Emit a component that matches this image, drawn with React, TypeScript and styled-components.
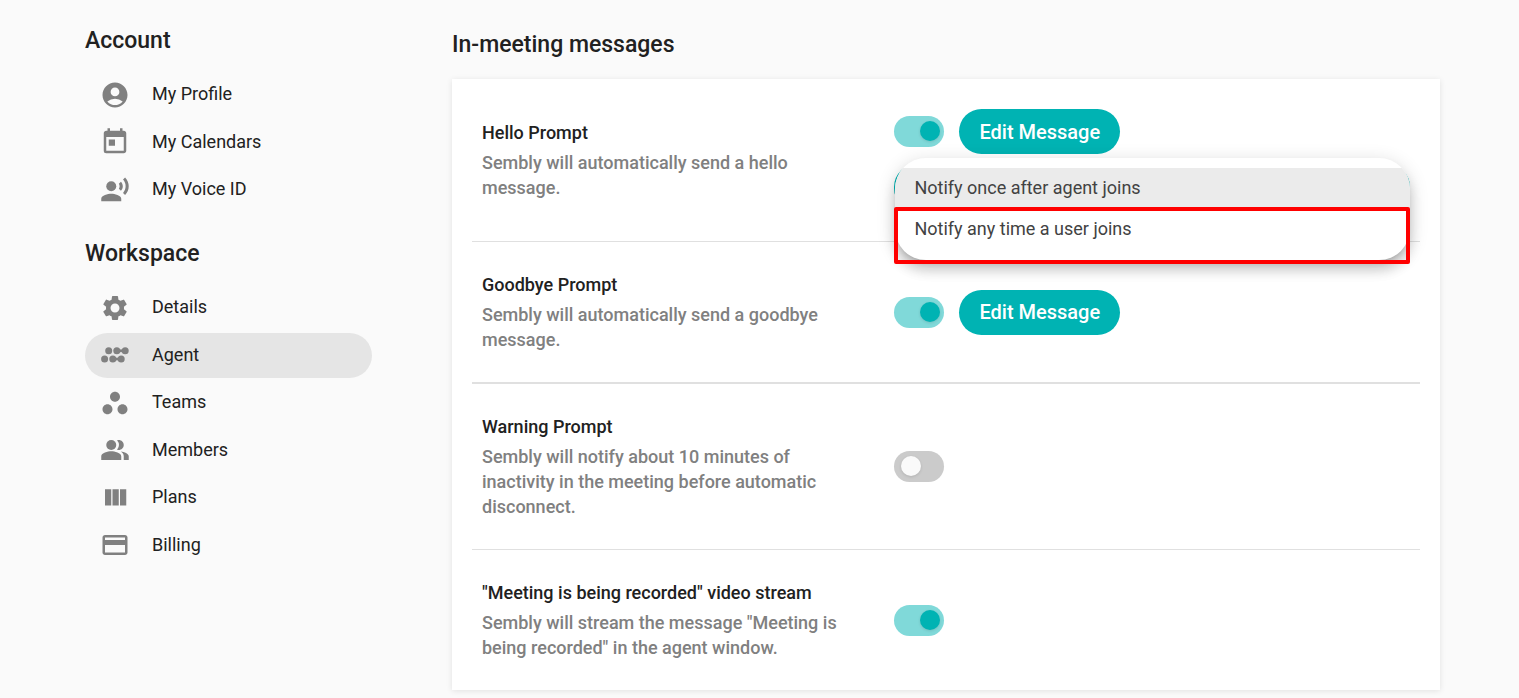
import React, { useState } from 'react';
import styled, { createGlobalStyle } from 'styled-components';
import type { IconType } from 'react-icons';
import {
  MdAccountCircle,
  MdCreditCard,
  MdPeopleAlt,
  MdRecordVoiceOver,
  MdSettings,
  MdToday,
  MdWorkspaces,
} from 'react-icons/md';

const teal = '#00b3b3';

const GlobalStyle = createGlobalStyle`
  *, *::before, *::after { box-sizing: border-box; }
  body {
    margin: 0;
    background: #fafafa;
    color: #212121;
    font-family: Roboto, "Liberation Sans", sans-serif;
    font-size: 18px;
  }
`;

const Page = styled.div`
  display: flex;
  align-items: flex-start;
  gap: 80px;
  padding: 26px 79px 8px 85px;
`;

const Sidebar = styled.nav`
  flex: 0 0 287px;
`;

const SectionTitle = styled.h2`
  margin: 0 0 16px;
  font-size: 23px;
  line-height: 30px;
  font-weight: 500;
`;

const NavList = styled.ul<{ $height: number }>`
  display: flex;
  flex-direction: column;
  justify-content: space-between;
  min-height: ${(p) => p.$height}px;
  margin: 0 0 27px;
  padding: 0;
  list-style: none;
`;

const NavLink = styled.a<{ $active?: boolean }>`
  display: flex;
  align-items: center;
  gap: 22px;
  height: 45px;
  padding: 0 15px;
  border-radius: 23px;
  background: ${(p) => (p.$active ? '#e5e5e5' : 'transparent')};
  color: #212121;
  text-decoration: none;
  line-height: 25px;

  svg {
    width: 30px;
    height: 30px;
    flex: none;
    color: #808080;
  }
`;

const NavLabel = styled.span`
  padding-bottom: 2px;
`;

const Main = styled.main`
  flex: 1;
  min-width: 0;
  padding-top: 4px;
`;

const PageTitle = styled.h1`
  margin: 0 0 19px;
  font-size: 23px;
  line-height: 30px;
  font-weight: 500;
`;

const Card = styled.section`
  padding: 0 20px;
  background: #fff;
  box-shadow: 0 1px 6px rgba(0, 0, 0, 0.1);
`;

const Row = styled.div<{ $rule?: number }>`
  display: grid;
  grid-template-columns: 4fr 5fr;
  align-items: center;
  padding: 30px 10px;
  border-bottom: ${(p) => p.$rule || 0}px solid #e0e0e0;
`;

const Copy = styled.div`
  padding-right: 40px;
`;

const RowTitle = styled.label`
  display: block;
  margin-bottom: 5px;
  line-height: 25px;
  font-weight: 500;
`;

const Description = styled.p`
  margin: 0;
  color: #808080;
  line-height: 25px;
  font-weight: 500;
`;

const Controls = styled.div`
  position: relative;
  display: grid;
  gap: 10px;
`;

const ControlLine = styled.div`
  display: flex;
  align-items: center;
  gap: 15px;
`;

const Toggle = styled.input`
  appearance: none;
  display: block;
  width: 50px;
  height: 31px;
  margin: 0;
  padding: 5px 4px 6px 7px;
  border-radius: 16px;
  background: #cbcbcb;

  &::before {
    content: '';
    display: block;
    width: 20px;
    height: 20px;
    border-radius: 50%;
    background: #fafafa;
    box-shadow: 0 1px 3px rgba(0, 0, 0, 0.12);
  }

  &:checked {
    background: #80d9d9;
    padding-left: 26px;
  }

  &:checked::before {
    background: ${teal};
  }
`;

const Button = styled.button`
  height: 45px;
  padding: 0 20px;
  border: 0;
  border-radius: 23px;
  background: ${teal};
  color: #fff;
  font-family: inherit;
  font-size: 20px;
  font-weight: 500;
`;

const Select = styled.select`
  width: 100%;
  height: 47px;
  padding: 0 20px;
  border: 2px solid ${teal};
  border-radius: 23px;
  background: #fff;
  color: #212121;
  font: inherit;
  appearance: none;
`;

const Menu = styled.ul`
  position: absolute;
  inset: 49px 0 auto 1px;
  z-index: 1;
  margin: 0;
  padding: 10px 0;
  overflow: hidden;
  border-radius: 31px;
  background: #fff;
  list-style: none;
  box-shadow:
    0 6px 6px -4px rgba(0, 0, 0, 0.2),
    0 10px 12px 1px rgba(0, 0, 0, 0.14),
    0 4px 18px 2px rgba(0, 0, 0, 0.12);
`;

const Option = styled.li<{ $selected?: boolean }>`
  height: 41px;
  padding: 0 19px;
  background: ${(p) => (p.$selected ? '#ebebeb' : 'transparent')};
  color: #424242;
  line-height: 39px;
`;

const Highlight = styled.div`
  position: absolute;
  inset: 98px 0 auto;
  z-index: 2;
  height: 57px;
  border: 4px solid #f00;
  border-radius: 2px;
  pointer-events: none;
`;

const AgentIcon = () => (
  <svg viewBox="0 0 30 30" fill="currentColor" aria-hidden="true">
    <circle cx="8.7" cy="10.8" r="3.5" />
    <circle cx="16.8" cy="10.8" r="3.5" />
    <circle cx="25.2" cy="10.8" r="3.5" />
    <path d="M18 8Q21 11 24 8V13.6Q21 10.6 18 13.6Z" />
    <circle cx="4.6" cy="19" r="3.5" />
    <circle cx="12.8" cy="19" r="3.5" />
    <circle cx="21.2" cy="19" r="3.5" />
    <path d="M14 16.2Q17 19.2 20 16.2V21.8Q17 18.8 14 21.8Z" />
  </svg>
);

const ColumnsIcon = () => (
  <svg viewBox="0 0 24 24" fill="currentColor" aria-hidden="true">
    <path d="M10 18h5V5h-5v13zm-6 0h5V5H4v13zM16 5v13h5V5h-5z" />
  </svg>
);

type NavItem = { label: string; icon: IconType | (() => React.JSX.Element); active?: boolean };

const sections: { title: string; height: number; items: NavItem[] }[] = [
  {
    title: 'Account',
    height: 140,
    items: [
      { label: 'My Profile', icon: MdAccountCircle },
      { label: 'My Calendars', icon: MdToday },
      { label: 'My Voice ID', icon: MdRecordVoiceOver },
    ],
  },
  {
    title: 'Workspace',
    height: 283,
    items: [
      { label: 'Details', icon: MdSettings },
      { label: 'Agent', icon: AgentIcon, active: true },
      { label: 'Teams', icon: MdWorkspaces },
      { label: 'Members', icon: MdPeopleAlt },
      { label: 'Plans', icon: ColumnsIcon },
      { label: 'Billing', icon: MdCreditCard },
    ],
  },
];

const prompts = [
  {
    id: 'hello',
    title: 'Hello Prompt',
    text: 'Sembly will automatically send a hello message.',
    on: true,
    editable: true,
    options: ['Notify once after agent joins', 'Notify any time a user joins'],
    rule: 1,
  },
  {
    id: 'goodbye',
    title: 'Goodbye Prompt',
    text: 'Sembly will automatically send a goodbye message.',
    on: true,
    editable: true,
    rule: 2,
  },
  {
    id: 'warning',
    title: 'Warning Prompt',
    text: 'Sembly will notify about 10 minutes of inactivity in the meeting before automatic disconnect.',
    on: false,
    rule: 1,
  },
  {
    id: 'stream',
    title: '"Meeting is being recorded" video stream',
    text: 'Sembly will stream the message "Meeting is being recorded" in the agent window.',
    on: true,
  },
];

const NotifySelect = ({ options }: { options: string[] }) => {
  const [value, setValue] = useState(options[0]);
  return (
    <>
      <Select aria-label="When to notify" value={value} onChange={(e) => setValue(e.target.value)}>
        {options.map((o) => (
          <option key={o}>{o}</option>
        ))}
      </Select>
      <Menu role="listbox" aria-label="When to notify">
        {options.map((o) => (
          <Option key={o} role="option" aria-selected={o === value} $selected={o === value} onClick={() => setValue(o)}>
            {o}
          </Option>
        ))}
      </Menu>
      <Highlight />
    </>
  );
};

export default function App() {
  return (
    <>
      <GlobalStyle />
      <Page>
        <Sidebar>
          {sections.map((section) => (
            <React.Fragment key={section.title}>
              <SectionTitle>{section.title}</SectionTitle>
              <NavList $height={section.height}>
                {section.items.map(({ label, icon: Icon, active }) => (
                  <li key={label}>
                    <NavLink href="#" $active={active} aria-current={active ? 'page' : undefined}>
                      <Icon />
                      <NavLabel>{label}</NavLabel>
                    </NavLink>
                  </li>
                ))}
              </NavList>
            </React.Fragment>
          ))}
        </Sidebar>
        <Main>
          <PageTitle>In-meeting messages</PageTitle>
          <Card>
            {prompts.map((p) => (
              <Row key={p.id} $rule={p.rule}>
                <Copy>
                  <RowTitle htmlFor={p.id}>{p.title}</RowTitle>
                  <Description>{p.text}</Description>
                </Copy>
                <Controls>
                  <ControlLine>
                    <Toggle type="checkbox" role="switch" id={p.id} defaultChecked={p.on} />
                    {p.editable && <Button type="button">Edit Message</Button>}
                  </ControlLine>
                  {p.options && <NotifySelect options={p.options} />}
                </Controls>
              </Row>
            ))}
          </Card>
        </Main>
      </Page>
    </>
  );
}
